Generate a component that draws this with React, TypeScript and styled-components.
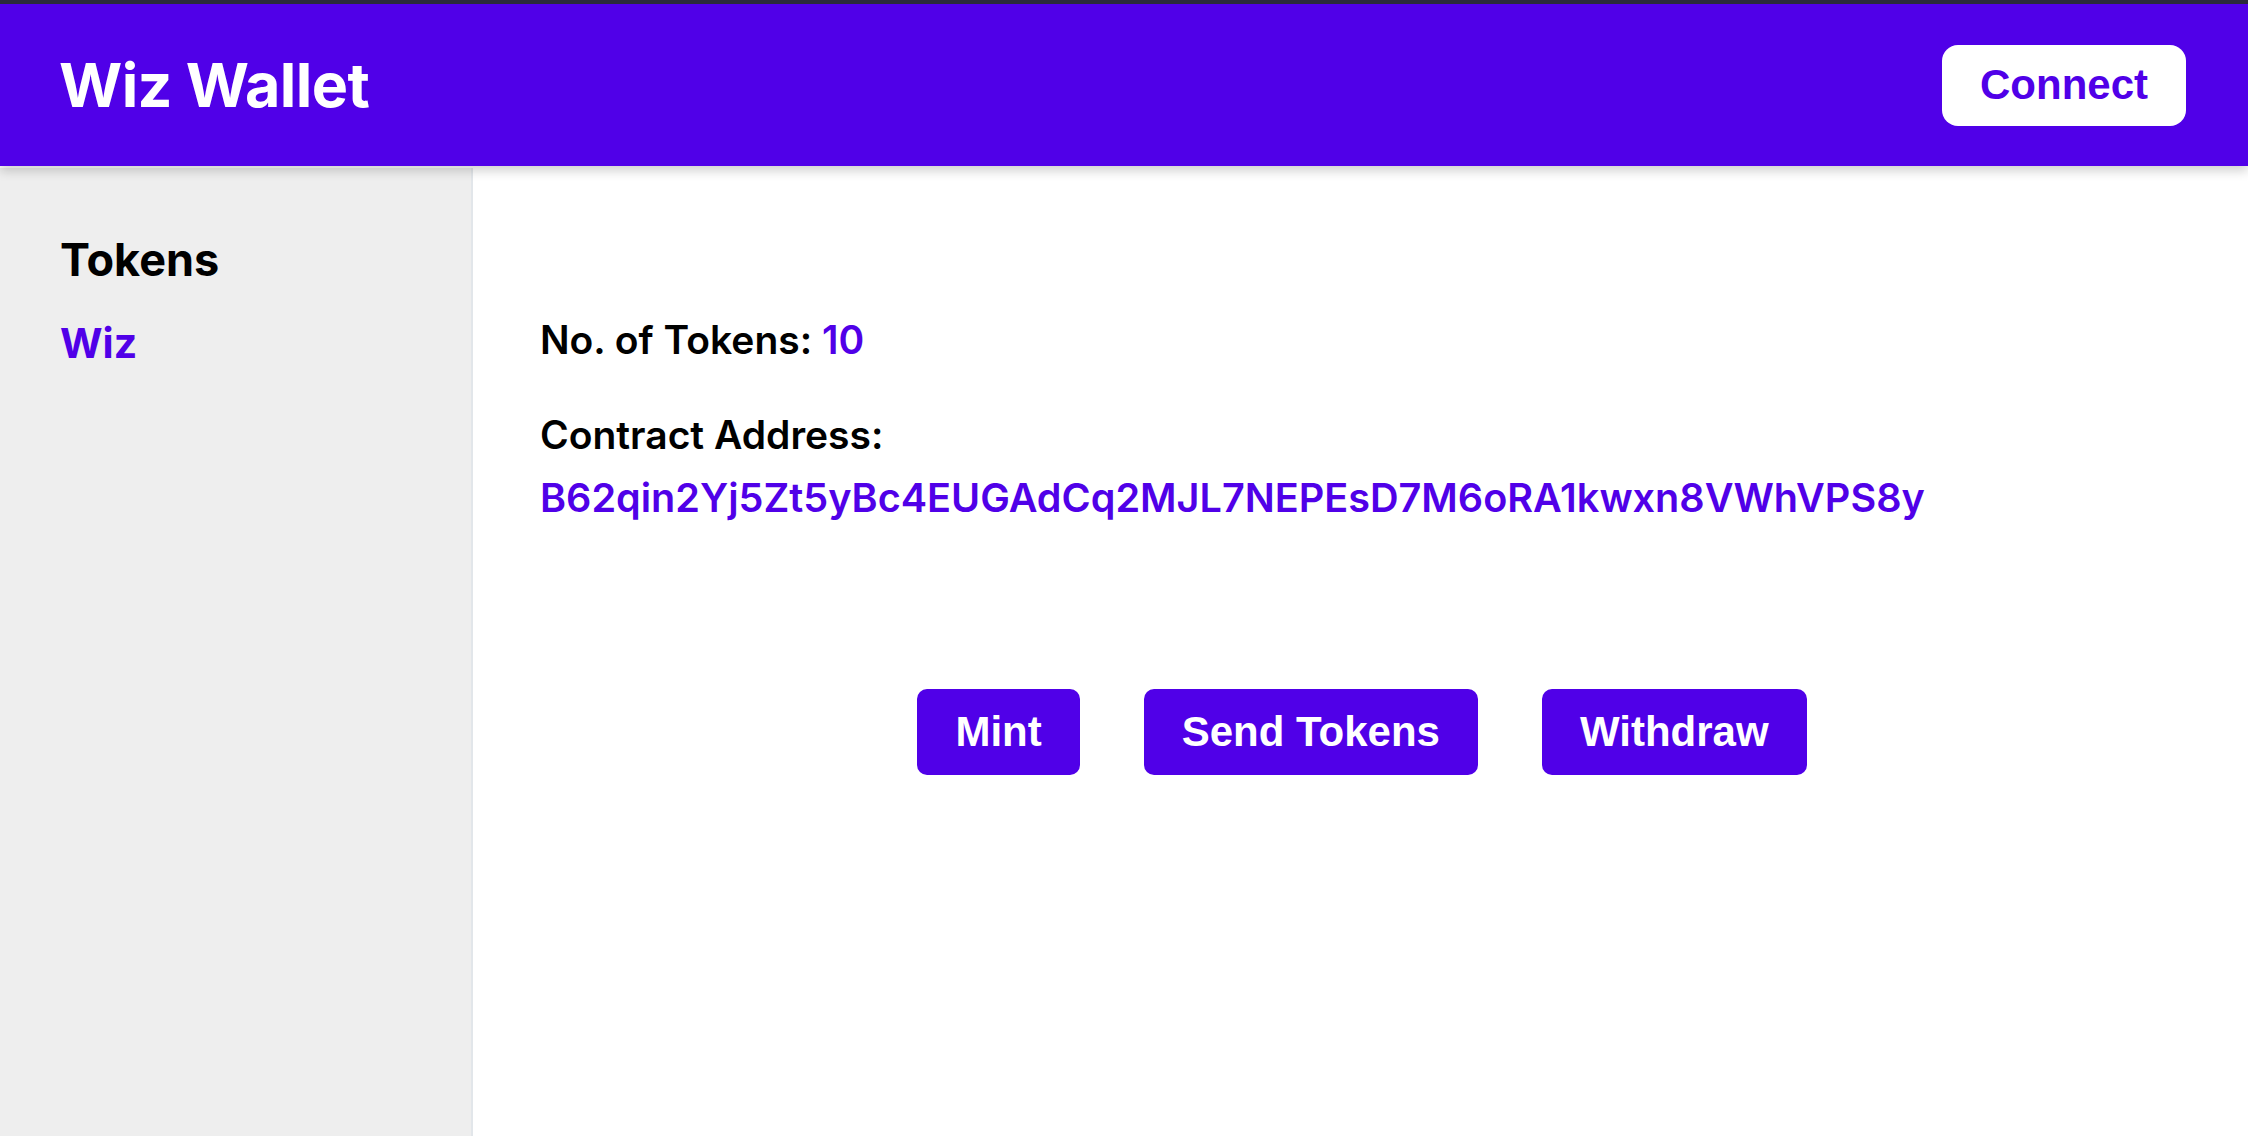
import styled, { createGlobalStyle } from "styled-components";

const GlobalStyle = createGlobalStyle`
  html, body {
    margin: 0;
    padding: 0;
    background: #ffffff;
  }

  #root {
    min-height: 100vh;
  }
`;

const purple = "#5000e8";

const Page = styled.div`
  display: flex;
  flex-direction: column;
  height: 100vh;
  border-top: 4px solid #2b2a3b;
  box-sizing: border-box;
  font-family: Inter, "Noto Sans", sans-serif;
  overflow: hidden;
`;

const Header = styled.header`
  position: relative;
  z-index: 2;
  display: flex;
  align-items: center;
  justify-content: space-between;
  height: 162px;
  flex-shrink: 0;
  padding: 0 62px 0 59px;
  background: ${purple};
  box-shadow: 0 5px 10px rgba(0, 0, 0, 0.18);
`;

const Title = styled.h1`
  margin: 0;
  color: #ffffff;
  font-size: 61px;
  font-weight: 700;
  line-height: 1;
  letter-spacing: -0.6px;
`;

const ConnectButton = styled.button`
  height: 81px;
  padding: 0 38px;
  border: none;
  border-radius: 16px;
  background: #ffffff;
  color: ${purple};
  font-family: "Liberation Sans", Arial, sans-serif;
  font-size: 42px;
  font-weight: 700;
  cursor: pointer;
`;

const Body = styled.div`
  display: flex;
  flex: 1;
  margin-top: 2px;
  min-height: 0;
`;

const Sidebar = styled.aside`
  width: 473px;
  flex-shrink: 0;
  padding: 64px 0 0 60px;
  box-sizing: border-box;
  background: #eeeeee;
  border-right: 2px solid #e2e6ea;
`;

const SidebarTitle = styled.h2`
  margin: 0;
  color: #000000;
  font-size: 45px;
  font-weight: 700;
  line-height: 56px;
`;

const TokenLink = styled.a`
  display: block;
  margin-top: 30px;
  color: ${purple};
  font-size: 41px;
  font-weight: 700;
  line-height: 50px;
  text-decoration: none;
  cursor: pointer;
`;

const Main = styled.main`
  flex: 1;
  display: flex;
  flex-direction: column;
  padding: 148px 0 0 67px;
`;

const InfoLine = styled.div<{ $gap?: number }>`
  margin-top: ${({ $gap }) => $gap ?? 0}px;
  color: #000000;
  font-size: 39px;
  font-weight: 600;
  line-height: 48px;
`;

const Value = styled.span`
  color: ${purple};
`;

const Address = styled.div`
  margin-top: 15px;
  color: ${purple};
  font-size: 39.6px;
  font-weight: 600;
  line-height: 48px;
`;

const Actions = styled.div`
  display: flex;
  justify-content: center;
  gap: 64px;
  margin-top: 167px;
  padding-right: 64px;
`;

const ActionButton = styled.button`
  height: 86px;
  padding: 0 38px;
  border: none;
  border-radius: 10px;
  background: ${purple};
  color: #ffffff;
  font-family: "Liberation Sans", Arial, sans-serif;
  font-size: 42px;
  font-weight: 700;
  cursor: pointer;
`;

const actions = ["Mint", "Send Tokens", "Withdraw"];

export default function App() {
  return (
    <>
      <GlobalStyle />
      <Page>
        <Header>
          <Title>Wiz Wallet</Title>
          <ConnectButton>Connect</ConnectButton>
        </Header>
        <Body>
          <Sidebar>
            <SidebarTitle>Tokens</SidebarTitle>
            <TokenLink>Wiz</TokenLink>
          </Sidebar>
          <Main>
            <InfoLine>
              No. of Tokens: <Value>10</Value>
            </InfoLine>
            <InfoLine $gap={47}>Contract Address:</InfoLine>
            <Address>B62qin2Yj5Zt5yBc4EUGAdCq2MJL7NEPEsD7M6oRA1kwxn8VWhVPS8y</Address>
            <Actions>
              {actions.map((label) => (
                <ActionButton key={label}>{label}</ActionButton>
              ))}
            </Actions>
          </Main>
        </Body>
      </Page>
    </>
  );
}
